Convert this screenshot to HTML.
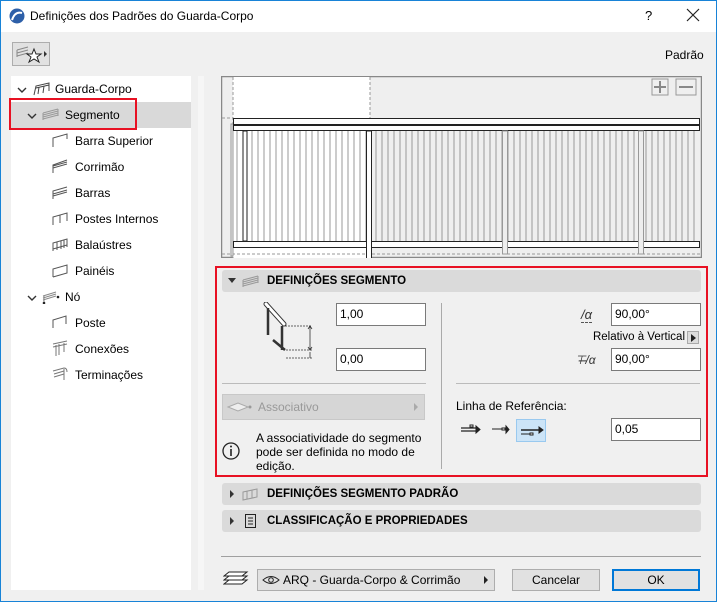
<!DOCTYPE html>
<html><head><meta charset="utf-8"><style>
*{margin:0;padding:0;box-sizing:border-box}
body{width:717px;height:602px;overflow:hidden;font-family:"Liberation Sans",sans-serif;font-size:12px;color:#000;background:#f0f0f0;position:relative}
.a{position:absolute}
.win{position:absolute;left:0;top:0;width:717px;height:602px;border:1px solid #1883d7}
.inp{position:absolute;background:#fff;border:1px solid #7a7a7a;padding:3px 0 0 3px;height:23px;font-size:12px}
.hdr{position:absolute;left:222px;width:479px;height:22px;background:#dadada;border-radius:3px;font-weight:bold;font-size:11.5px;line-height:22px}
.ti{position:absolute;font-size:12px;line-height:14px}
.btn{position:absolute;background:#e1e1e1;border:1px solid #adadad;text-align:center;line-height:20px}
</style></head><body>
<div class="win"></div>
<div class="a" style="left:1px;top:1px;width:715px;height:31px;background:#fff"></div>
<svg class="a" style="left:9px;top:8px" width="16" height="16"><circle cx="8" cy="8" r="7.5" fill="#2d5fa8"/><path d="M3 12 Q6 3 13 5" stroke="#fff" stroke-width="2" fill="none"/></svg>
<div class="a" style="left:30px;top:9px;font-size:12px">Definições dos Padrões do Guarda-Corpo</div>
<div class="a" style="left:645px;top:8px;font-size:13px">?</div>
<svg class="a" style="left:686px;top:8px" width="14" height="14"><path d="M1 1L13 13M13 1L1 13" stroke="#222" stroke-width="1.2"/></svg>

<div class="a" style="left:12px;top:42px;width:38px;height:24px;border:1px solid #adadad;background:#e1e1e1"></div>
<svg class="a" style="left:14px;top:44px" width="34" height="20"><path d="M3 6 L14 3 M3 9 L14 6 M3 12 L14 9 M3 6 L3 13" stroke="#888" fill="none"/><path d="M20 5 L22 10 L27 10 L23 13 L25 18 L20 15 L15 18 L17 13 L13 10 L18 10Z" fill="#fff" stroke="#222"/><path d="M30 7 L33 10 L30 13Z" fill="#333"/></svg>
<div class="a" style="left:665px;top:48px">Padrão</div>

<div class="a" style="left:11px;top:76px;width:180px;height:514px;background:#fff"></div>
<div class="a" style="left:11px;top:102px;width:180px;height:26px;background:#d9d9d9"></div>
<div class="a" style="left:9px;top:98px;width:128px;height:32px;border:2px solid #e81123"></div>
<div class="a" style="left:198px;top:76px;width:6px;height:514px;background:#f6f6f6"></div>

<svg class="a" style="left:17px;top:86px" width="10" height="8"><path d="M1 2L5 6L9 2" stroke="#333" stroke-width="1.4" fill="none"/></svg>
<svg class="a" style="left:33px;top:82px" width="18" height="14"><path d="M1 13 L3 4 L16 1 L16 9 M3 6 L16 3 M6 5 L5 12 M11 4 L10 11" stroke="#444" fill="none"/></svg>
<div class="ti" style="left:55px;top:82px">Guarda-Corpo</div>
<svg class="a" style="left:27px;top:112px" width="10" height="8"><path d="M1 2L5 6L9 2" stroke="#333" stroke-width="1.4" fill="none"/></svg>
<svg class="a" style="left:42px;top:107px" width="18" height="14"><path d="M1 6 L16 2 M1 8 L16 4 M1 10 L16 6 M1 12 L16 8 M1 6 L1 13 M16 2 L16 9" stroke="#999" fill="none"/></svg>
<div class="ti" style="left:65px;top:108px">Segmento</div>
<svg class="a" style="left:52px;top:133px" width="18" height="160"><g stroke="#555" fill="none">
<path d="M1 14 L1 5 L15 1 L15 6"/>
<path d="M1 40 L1 32 L15 27 M1 33 L15 29 M1 35 L15 31"/>
<path d="M1 66 L1 58 L15 54 M1 61 L15 57 M1 63 L15 59"/>
<path d="M1 92 L1 84 L15 80 L15 88 M8 82 L8 90"/>
<path d="M1 118 L1 110 L15 106 L15 114 M5 109 L5 117 M9 108 L9 116 M12 107 L12 115 M1 116 L15 112"/>
<path d="M1 144 L1 136 L15 132 L15 140 L1 144"/></g></svg>
<div class="ti" style="left:75px;top:134px">Barra Superior</div>
<div class="ti" style="left:75px;top:160px">Corrimão</div>
<div class="ti" style="left:75px;top:186px">Barras</div>
<div class="ti" style="left:75px;top:212px">Postes Internos</div>
<div class="ti" style="left:75px;top:238px">Balaústres</div>
<div class="ti" style="left:75px;top:264px">Painéis</div>
<svg class="a" style="left:27px;top:294px" width="10" height="8"><path d="M1 2L5 6L9 2" stroke="#333" stroke-width="1.4" fill="none"/></svg>
<svg class="a" style="left:42px;top:288px" width="18" height="16"><path d="M1 8 L14 4 M1 10 L14 6 M1 12 L14 8 M2 8 L2 15" stroke="#888" fill="none"/><circle cx="2" cy="15" r="1.3" fill="#222"/><circle cx="16" cy="9" r="1.3" fill="#222"/></svg>
<div class="ti" style="left:65px;top:290px">Nó</div>
<svg class="a" style="left:52px;top:314px" width="18" height="76"><g stroke="#555" fill="none"><path d="M1 14 L1 6 L14 2 L14 10"/>
<path d="M1 30 L15 27 M1 33 L15 30 M4 31 L4 42 M7 30 L7 41 M12 29 L12 38" stroke="#777"/>
<path d="M1 57 L12 54 Q15 54 15 58 M2 60 L12 57 M2 63 L12 60 M12 55 L12 66" stroke="#777"/></g></svg>
<div class="ti" style="left:75px;top:316px">Poste</div>
<div class="ti" style="left:75px;top:342px">Conexões</div>
<div class="ti" style="left:75px;top:368px">Terminações</div>

<svg class="a" style="left:221px;top:76px" width="481" height="182">
<rect x="0.5" y="0.5" width="480" height="181" fill="#efefef" stroke="#888" stroke-width="1.5"/>
<rect x="12" y="1" width="137" height="181" fill="#fff"/>
<g stroke="#999" stroke-dasharray="3,2"><path d="M12 1V182M149 1V182M1 42H12M1 178H480"/></g>
<rect x="431" y="3" width="16" height="16" fill="none" stroke="#999"/><path d="M433 11H445M439 5V17" stroke="#888" stroke-width="2"/>
<rect x="455" y="3" width="20" height="16" fill="none" stroke="#999"/><path d="M458 11H472" stroke="#888" stroke-width="2"/>
<rect x="10" y="48" width="2" height="132" fill="#eee" stroke="#999"/>
<g stroke="#999" stroke-width="1">
<path d="M16 55V165M25 55V165M31 55V165M37 55V165M43 55V165M49 55V165M55 55V165M61 55V165M67 55V165M73 55V165M79 55V165M85 55V165M91 55V165M97 55V165M103 55V165M109 55V165M115 55V165M121 55V165M127 55V165M133 55V165M139 55V165M145 55V165"/>
<path d="M155 55V165M161 55V165M167 55V165M173 55V165M179 55V165M185 55V165M191 55V165M197 55V165M203 55V165M209 55V165M215 55V165M221 55V165M227 55V165M233 55V165M239 55V165M245 55V165M251 55V165M257 55V165M263 55V165M269 55V165M275 55V165M281 55V165M287 55V165M293 55V165M299 55V165M305 55V165M311 55V165M317 55V165M323 55V165M329 55V165M335 55V165M341 55V165M347 55V165M353 55V165M359 55V165M365 55V165M371 55V165M377 55V165M383 55V165M389 55V165M395 55V165M401 55V165M407 55V165M413 55V165M419 55V165M425 55V165M431 55V165M437 55V165M443 55V165M449 55V165M455 55V165M461 55V165M467 55V165M473 55V165"/></g>
<rect x="22" y="55" width="4" height="110" fill="#fff" stroke="#222"/>
<rect x="12.5" y="42.5" width="466" height="12" fill="#fff" stroke="#222"/>
<path d="M12 49H479" stroke="#222" stroke-width="2"/>
<rect x="12.5" y="165.5" width="466" height="6" fill="#fff" stroke="#222"/>
<rect x="145.5" y="55" width="5" height="128" fill="#fff" stroke="#222"/>
<rect x="281.5" y="55" width="5" height="123" fill="#eee" stroke="#999"/>
<rect x="417.5" y="55" width="5" height="123" fill="#eee" stroke="#999"/>
</svg>

<div class="a" style="left:215px;top:266px;width:493px;height:211px;border:2px solid #e81123"></div>
<div class="hdr" style="top:270px"><span style="position:absolute;left:6px;top:8px;border-left:4px solid transparent;border-right:4px solid transparent;border-top:5px solid #333"></span>
<svg class="a" style="left:20px;top:4px" width="18" height="14"><path d="M1 6 L16 2 M1 8 L16 4 M1 10 L16 6 M1 12 L16 8 M1 6 L1 13 M16 2 L16 9" stroke="#999" fill="none"/></svg><span style="position:absolute;left:45px">DEFINIÇÕES SEGMENTO</span></div>
<svg class="a" style="left:262px;top:302px" width="56" height="64"><path d="M4 2 L22 22" stroke="#333" stroke-width="5" stroke-linecap="round"/><path d="M4 2 L22 22" stroke="#fff" stroke-width="3" stroke-linecap="round"/>
<path d="M6 6V33M11 38L23 48M20 24V48" stroke="#333" stroke-width="2.5"/>
<path d="M23 24H50M24 48H50M24 56H50" stroke="#333" stroke-dasharray="2,1" stroke-width=".8"/>
<path d="M48 24V48M48 50V56M46 27L48 24L50 27M46 45L48 48L50 45" stroke="#333" fill="none" stroke-width=".8"/></svg>
<div class="inp" style="left:336px;top:303px;width:90px">1,00</div>
<div class="inp" style="left:336px;top:348px;width:90px">0,00</div>
<div class="a" style="left:222px;top:383px;width:204px;height:1px;background:#bbb"></div>
<div class="a" style="left:441px;top:303px;width:1px;height:166px;background:#aaa"></div>
<div class="a" style="left:222px;top:394px;width:203px;height:26px;background:#d6d6d6;border:1px solid #c8c8c8;color:#999;line-height:24px;padding-left:35px">Associativo<span style="position:absolute;right:6px;top:8px;border-top:4px solid transparent;border-bottom:4px solid transparent;border-left:4px solid #aaa"></span></div>
<svg class="a" style="left:226px;top:400px" width="28" height="14"><path d="M2 7 L12 3 L22 7 L12 11Z" fill="#eee" stroke="#aaa"/><circle cx="24" cy="7" r="1.5" fill="#999"/></svg>
<svg class="a" style="left:221px;top:441px" width="20" height="20"><circle cx="10" cy="10" r="8" fill="none" stroke="#222" stroke-width="1.3"/><path d="M10 8V15" stroke="#222" stroke-width="1.6"/><circle cx="10" cy="5.5" r="1" fill="#222"/></svg>
<div class="a" style="left:256px;top:431px;line-height:14px;font-size:12px">A associatividade do segmento<br>pode ser definida no modo de<br>edição.</div>

<div class="a" style="left:581px;top:308px;font-size:13px;font-style:italic;color:#333;border-bottom:1px dashed #555;line-height:14px">/α</div>
<div class="inp" style="left:611px;top:303px;width:90px">90,00°</div>
<div class="a" style="right:32px;top:331px;font-size:11.5px;white-space:nowrap">Relativo à Vertical</div>
<div class="a" style="left:687px;top:331px;width:12px;height:13px;background:#ddd;border:1px solid #aaa"><span style="position:absolute;left:3px;top:2px;border-top:4px solid transparent;border-bottom:4px solid transparent;border-left:5px solid #222"></span></div>
<div class="a" style="left:575px;top:353px;font-size:12px;color:#333;font-style:italic">⊤̶/α</div>
<div class="inp" style="left:611px;top:348px;width:90px">90,00°</div>
<div class="a" style="left:456px;top:383px;width:244px;height:1px;background:#bbb"></div>
<div class="a" style="left:456px;top:399px">Linha de Referência:</div>
<div class="a" style="left:516px;top:419px;width:30px;height:23px;background:#cce4f7;border:1px solid #99c9ef"></div>
<svg class="a" style="left:460px;top:420px" width="90" height="20"><g stroke="#222" fill="#222">
<path d="M1 8H17 M1 11H16" stroke-width="1.3"/><path d="M16 6L20 9.5L16 13Z"/><rect x="10" y="5" width="3" height="2" fill="#fff"/>
<path d="M32 9H44" stroke-width="1"/><rect x="42" y="8" width="3" height="2" fill="#fff"/><path d="M46 6L49 9.5L46 13Z"/>
<path d="M61 10H80" stroke-width="1.5"/><path d="M79 7L83 10L79 13Z"/><path d="M61 14H70" stroke-width="1"/><rect x="70" y="13" width="3" height="2" fill="#fff"/></g></svg>
<div class="inp" style="left:611px;top:418px;width:90px">0,05</div>

<div class="hdr" style="top:483px"><span style="position:absolute;left:8px;top:7px;border-top:4px solid transparent;border-bottom:4px solid transparent;border-left:4px solid #333"></span>
<svg class="a" style="left:20px;top:4px" width="18" height="14"><path d="M1 5 L15 2 L15 10 L1 13Z M5 4 L5 12 M10 3 L10 11" stroke="#999" fill="none"/></svg><span style="position:absolute;left:45px">DEFINIÇÕES SEGMENTO PADRÃO</span></div>
<div class="hdr" style="top:510px"><span style="position:absolute;left:8px;top:7px;border-top:4px solid transparent;border-bottom:4px solid transparent;border-left:4px solid #333"></span>
<svg class="a" style="left:22px;top:3px" width="14" height="16"><rect x="1.5" y="1.5" width="10" height="13" fill="none" stroke="#222"/><path d="M4 5H9M4 8H9M4 11H9" stroke="#222"/></svg><span style="position:absolute;left:45px">CLASSIFICAÇÃO E PROPRIEDADES</span></div>

<div class="a" style="left:221px;top:556px;width:480px;height:1px;background:#a0a0a0"></div>
<svg class="a" style="left:223px;top:570px" width="26" height="18"><g stroke="#222" fill="#fff"><path d="M1 14 L6 10 H24 L19 14Z"/><path d="M1 10 L6 6 H24 L19 10Z"/><path d="M1 6 L6 2 H24 L19 6Z"/></g></svg>
<div class="a" style="left:257px;top:569px;width:238px;height:22px;background:#e1e1e1;border:1px solid #adadad;line-height:20px;padding-left:25px">ARQ - Guarda-Corpo &amp; Corrimão<span style="position:absolute;right:6px;top:6px;border-top:4px solid transparent;border-bottom:4px solid transparent;border-left:4px solid #222"></span></div>
<svg class="a" style="left:262px;top:574px" width="18" height="12"><path d="M1 6 Q9 -1 17 6 Q9 13 1 6Z" fill="none" stroke="#222"/><circle cx="9" cy="6" r="2.3" fill="none" stroke="#222"/></svg>
<div class="btn" style="left:512px;top:569px;width:88px;height:22px">Cancelar</div>
<div class="btn" style="left:612px;top:569px;width:88px;height:22px;border:2px solid #0078d7;line-height:18px">OK</div>
</body></html>
